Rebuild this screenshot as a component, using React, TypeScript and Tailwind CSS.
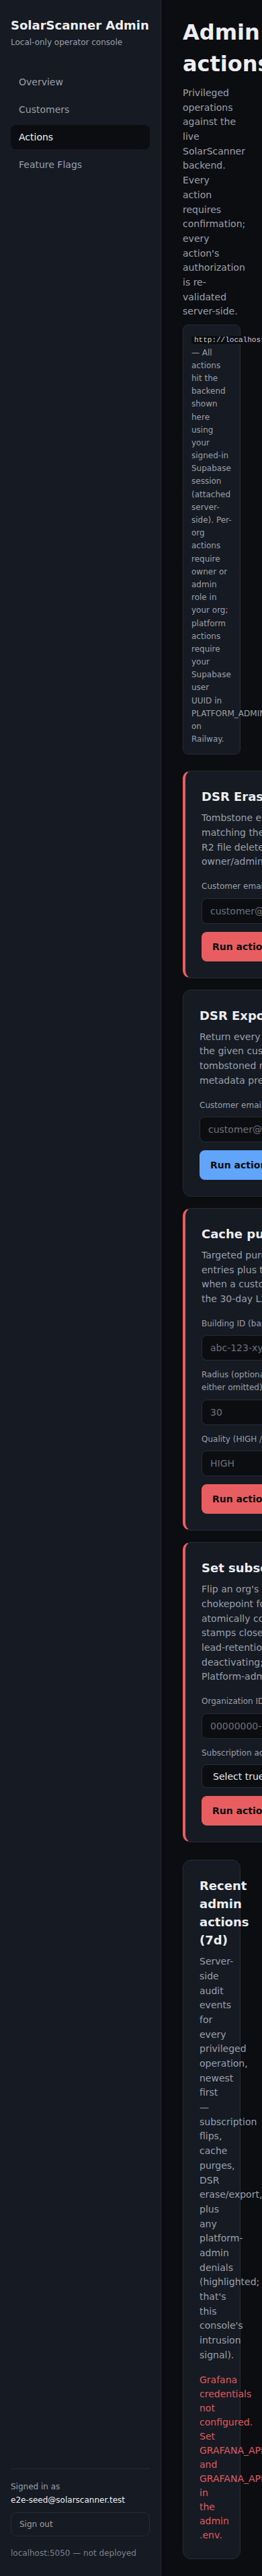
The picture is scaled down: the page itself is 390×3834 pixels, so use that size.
import React, { useState } from 'react';

type Field = {
  label: string;
  placeholder?: string;
  select?: boolean;
};

type AdminAction = {
  title: string;
  description: string;
  danger: boolean;
  fields: Field[];
};

const navItems = ['Overview', 'Customers', 'Actions', 'Feature Flags'];

const actions: AdminAction[] = [
  {
    title: 'DSR Erase',
    danger: true,
    description:
      "Tombstone every lead, scan and report matching the customer's email, queue R2 file deletes, and log it. Requires org owner/admin role.",
    fields: [{ label: 'Customer email', placeholder: 'customer@example.com' }],
  },
  {
    title: 'DSR Export',
    danger: false,
    description:
      'Return every lead, scan and report for the given customer, including tombstoned records, as JSON, with all metadata preserved.',
    fields: [{ label: 'Customer email', placeholder: 'customer@example.com' }],
  },
  {
    title: 'Cache purge',
    danger: true,
    description:
      'Targeted purge of cached analysis entries plus their rendered tiles. Use when a customer reports stale results; the 30-day L2 cache expires on its own.',
    fields: [
      { label: 'Building ID (bare, no prefix)', placeholder: 'abc-123-xyz' },
      { label: 'Radius (optional; leave blank to purge ALL if either omitted)', placeholder: '30' },
      { label: 'Quality (HIGH / MEDIUM / LOW)', placeholder: 'HIGH' },
    ],
  },
  {
    title: 'Set subscription active',
    danger: true,
    description:
      "Flip an org's subscription state via the chokepoint for manual overrides, which atomically commits the flag change, stamps closed_at, and schedules the lead-retention purge window when deactivating; reactivating clears it. Platform-admin only.",
    fields: [
      { label: 'Organization ID', placeholder: '00000000-0000-0000-0000-000000000000' },
      { label: 'Subscription active', select: true },
    ],
  },
];

const ActionCard: React.FC<{ action: AdminAction }> = ({ action }) => {
  const [values, setValues] = useState<Record<string, string>>({});

  return (
    <section
      className={
        action.danger
          ? 'rounded-xl border border-[#262b36] border-l-4 border-l-[#e85d5f] bg-[#161a23] p-6'
          : 'rounded-xl border border-[#262b36] bg-[#161a23] p-6'
      }
    >
      <h2 className="text-lg leading-[27px] font-bold text-[#eceef2]">{action.title}</h2>
      <p className="mt-2 text-sm leading-[1.55] text-[#9aa0ab]">{action.description}</p>
      <form className="mt-4 flex flex-col gap-3" onSubmit={(e) => e.preventDefault()}>
        {action.fields.map((field) => (
          <label key={field.label} className="block text-xs leading-[1.55] text-[#9aa0ab]">
            {field.label}
            {field.select ? (
              <select
                value={values[field.label] ?? ''}
                onChange={(e) => setValues({ ...values, [field.label]: e.target.value })}
                className="mt-2 block h-[35px] w-full rounded-lg border border-[#262b36] bg-[#0c0d11] px-3 text-sm text-[#e6e8ee]"
              >
                <option value="">Select true / false</option>
                <option value="true">true</option>
                <option value="false">false</option>
              </select>
            ) : (
              <input
                type="text"
                placeholder={field.placeholder}
                value={values[field.label] ?? ''}
                onChange={(e) => setValues({ ...values, [field.label]: e.target.value })}
                className="mt-2 block h-[38px] w-full rounded-lg border border-[#262b36] bg-[#0c0d11] px-3 text-sm text-[#e6e8ee] placeholder-[#6c717b] focus:outline-none"
              />
            )}
          </label>
        ))}
        <button
          type="submit"
          className={
            action.danger
              ? 'h-11 self-start rounded-lg bg-[#e85d5f] px-4 text-sm font-bold text-[#0c0d11]'
              : 'h-11 self-start rounded-lg bg-[#60a5fa] px-4 text-sm font-bold text-[#0c0d11]'
          }
        >
          Run action
        </button>
      </form>
    </section>
  );
};

const App: React.FC = () => {
  return (
    <div className="flex min-h-screen bg-[#0c0d11] font-['DejaVu_Sans',sans-serif] leading-[1.55]">
      {/* Sidebar */}
      <aside className="flex w-60 shrink-0 flex-col border-r border-[#262b36] bg-[#161a23] px-4 pt-6 pb-6">
        <div className="text-lg leading-[1.55] font-bold text-[#eceef2]">SolarScanner Admin</div>
        <div className="mt-0.5 text-xs leading-[1.55] text-[#9aa0ab]">Local-only operator console</div>
        <nav className="mt-8 flex flex-col gap-[5px]">
          {navItems.map((item) => (
            <a
              key={item}
              href="#"
              className={
                item === 'Actions'
                  ? 'flex h-9 items-center rounded-lg bg-[#0c0d11] px-3 text-sm text-[#f0f2f5]'
                  : 'flex h-9 items-center rounded-lg px-3 text-sm text-[#9aa0ab]'
              }
            >
              {item}
            </a>
          ))}
        </nav>
        <div className="mt-auto border-t border-[#262b36] pt-4 text-xs">
          <div className="leading-5 text-[#9aa0ab]">Signed in as</div>
          <div className="leading-5 text-[#eceef2]">e2e-seed@solarscanner.test</div>
          <button
            type="button"
            className="mt-2 w-full rounded-lg border border-[#262b36] px-3 py-2 text-left text-xs leading-[1.55] text-[#9aa0ab]"
          >
            Sign out
          </button>
          <div className="mt-4 leading-[1.55] text-[#7c818c]">localhost:5050 — not deployed</div>
        </div>
      </aside>

      {/* Main */}
      <main className="min-w-0 flex-1 px-8 pt-[25px] pb-6">
        <h1 className="text-[32px] leading-[47px] font-bold text-[#eceef2]">Admin actions</h1>
        <p className="mt-[9px] text-sm leading-[1.55] text-[#9aa0ab]">
          Privileged operations against the live SolarScanner backend. Every action requires confirmation; every
          action's authorization is re-validated server-side.
        </p>
        <div className="mt-2 rounded-lg border border-[#262b36] bg-[#161a23] p-3 text-xs leading-[1.6] text-[#9aa0ab]">
          <code className="rounded bg-[#0c0d11] px-1 font-['Liberation_Mono',monospace] text-[11px] text-[#c9ccd4]">
            http://localhost:8000
          </code>{' '}
          — All actions hit the backend shown here using your signed-in Supabase session (attached server-side).
          Per-org actions require owner or admin role in your org; platform actions require your Supabase user UUID in
          PLATFORM_ADMIN_USER_IDS on Railway.
        </div>

        <div className="mt-6 grid grid-cols-[repeat(auto-fill,minmax(340px,1fr))] gap-[17px]">
          {actions.map((action) => (
            <ActionCard key={action.title} action={action} />
          ))}
        </div>

        <section className="mt-[26px] rounded-xl border border-[#262b36] bg-[#161a23] p-6">
          <h2 className="text-lg leading-[27px] font-bold text-[#eceef2]">Recent admin actions (7d)</h2>
          <p className="mt-2 text-sm leading-[1.55] text-[#9aa0ab]">
            Server-side audit events for every privileged operation, newest first — subscription flips, cache purges,
            DSR erase/export, plus any platform-admin denials (highlighted; that's this console's intrusion signal).
          </p>
          <p className="mt-4 text-sm leading-[1.5] text-[#e05a5c]">
            Grafana credentials not configured. Set GRAFANA_API_URL and GRAFANA_API_TOKEN in the admin .env.
          </p>
        </section>
      </main>
    </div>
  );
};

export default App;
